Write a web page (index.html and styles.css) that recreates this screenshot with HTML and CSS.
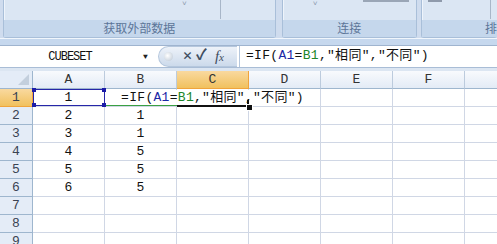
FILE: index.html
```html
<!DOCTYPE html>
<html lang="zh-CN">
<head>
    <meta charset="UTF-8">
    <title>Excel - IF</title>
    <link rel="stylesheet" href="styles.css">
</head>
<body>
    <!-- Ribbon -->
    <div class="ribbon">
        <div class="group g1">
            <div class="group-body">
                <span class="tick t1">˅</span>
                <span class="vline v1"></span>
            </div>
            <div class="group-label">获取外部数据</div>
        </div>
        <div class="group g2">
            <div class="group-body">
                <span class="tick t2">˅</span>
                <span class="cut-text"></span>
            </div>
            <div class="group-label">连接</div>
        </div>
        <div class="group g3">
            <div class="group-body">
                <span class="cut-a"></span>
                <span class="vline v3"></span>
            </div>
            <div class="group-label">排</div>
        </div>
    </div>
    <div class="ribbon-foot"></div>

    <!-- Formula bar -->
    <div class="formula-bar">
        <div class="name-box">
            <span class="name">CUBESET</span>
            <span class="drop">▼</span>
        </div>
        <div class="fx-buttons">
            <span class="dot"></span>
            <span class="btn cancel">✕</span>
            <span class="btn ok">✓</span>
            <span class="btn fx"><i>f</i><i class="x">x</i></span>
        </div>
        <div class="formula-input">=IF(<span class="ref-a">A1</span>=<span class="ref-b">B1</span>,"相同","不同")</div>
    </div>
    <div class="bar-gap"></div>

    <!-- Sheet -->
    <div class="sheet">
        <div class="corner"><span class="tri"></span></div>
        <div class="col-head">A</div>
        <div class="col-head">B</div>
        <div class="col-head active">C</div>
        <div class="col-head">D</div>
        <div class="col-head">E</div>
        <div class="col-head">F</div>
        <div class="col-head"></div>

        <div class="row-head active">1</div>
        <div class="cell">1</div>
        <div class="cell"></div>
        <div class="cell edit"><span class="edit-text">=IF(<span class="ref-a">A1</span>=<span class="ref-b">B1</span>,"相同","不同")</span></div>
        <div class="cell"></div><div class="cell"></div><div class="cell"></div><div class="cell"></div>

        <div class="row-head">2</div>
        <div class="cell">2</div><div class="cell">1</div>
        <div class="cell"></div><div class="cell"></div><div class="cell"></div><div class="cell"></div><div class="cell"></div>

        <div class="row-head">3</div>
        <div class="cell">3</div><div class="cell">1</div>
        <div class="cell"></div><div class="cell"></div><div class="cell"></div><div class="cell"></div><div class="cell"></div>

        <div class="row-head">4</div>
        <div class="cell">4</div><div class="cell">5</div>
        <div class="cell"></div><div class="cell"></div><div class="cell"></div><div class="cell"></div><div class="cell"></div>

        <div class="row-head">5</div>
        <div class="cell">5</div><div class="cell">5</div>
        <div class="cell"></div><div class="cell"></div><div class="cell"></div><div class="cell"></div><div class="cell"></div>

        <div class="row-head">6</div>
        <div class="cell">6</div><div class="cell">5</div>
        <div class="cell"></div><div class="cell"></div><div class="cell"></div><div class="cell"></div><div class="cell"></div>

        <div class="row-head">7</div>
        <div class="cell"></div><div class="cell"></div><div class="cell"></div><div class="cell"></div><div class="cell"></div><div class="cell"></div><div class="cell"></div>

        <div class="row-head">8</div>
        <div class="cell"></div><div class="cell"></div><div class="cell"></div><div class="cell"></div><div class="cell"></div><div class="cell"></div><div class="cell"></div>

        <div class="row-head">9</div>
        <div class="cell"></div><div class="cell"></div><div class="cell"></div><div class="cell"></div><div class="cell"></div><div class="cell"></div><div class="cell"></div>

        <!-- reference highlights while editing -->
        <div class="ref-box-a">
            <span class="h h1"></span><span class="h h2"></span><span class="h h3"></span><span class="h h4"></span>
        </div>
        <div class="ref-line-b"></div>
        <div class="active-bottom"></div>
        <div class="active-right"></div>
        <div class="fill-handle"></div>
    </div>
</body>
</html>
```

FILE: styles.css
```css
/* Base */
body {
    margin: 0;
    width: 497px;
    height: 244px;
    overflow: hidden;
    background: #fff;
    font-family: 'Liberation Mono', 'Noto Sans CJK SC', monospace;
    color: #111;
}

/* Ribbon */
.ribbon {
    display: flex;
    height: 38px;
    background: #cfdcee;
    overflow: hidden;
}

.group {
    display: flex;
    flex-direction: column;
    border: 1px solid #a9bfd9;
    border-top: none;
    border-radius: 0 0 3px 3px;
    box-shadow: inset 1px 0 0 #eef4fb;
    background: #dbe6f3;
}

.g1 { margin-left: 3px; width: 272px; }
.g2 { margin-left: 6px; width: 134px; }
.g3 { margin-left: 4px; flex: 1; border-right: none; }

.group-body {
    position: relative;
    height: 20px;
}

.group-label {
    height: 17px;
    background: #c5d7ec;
    font-family: 'Noto Sans CJK SC', sans-serif;
    font-size: 12px;
    line-height: 16px;
    color: #5c7598;
    text-align: center;
}

.g3 .group-label {
    text-align: left;
    padding-left: 63px;
}

.tick {
    position: absolute;
    top: -1px;
    font-size: 8px;
    color: #8c9aae;
}

.t1 { left: 178px; }
.t2 { left: 30px; }

.vline {
    position: absolute;
    top: 0;
    width: 1px;
    height: 19px;
    background: #a8b6c8;
}

.v1 { left: 216px; }
.v3 { left: 68px; }

.cut-text {
    position: absolute;
    top: 0;
    left: 80px;
    width: 46px;
    height: 2px;
    background: #9aa6b6;
}

.cut-a {
    position: absolute;
    top: 0;
    left: 6px;
    width: 14px;
    height: 2px;
    background: #8f9aab;
}

.ribbon-foot {
    height: 6px;
    background: #c6d8ee;
    border-top: 1px solid #f1f6fc;
}

/* Formula bar */
.formula-bar {
    display: flex;
    height: 21px;
    border-top: 1px solid #9fb4cf;
    background: #fff;
}

.name-box {
    width: 158px;
    display: flex;
    align-items: center;
}

.name {
    width: 140px;
    text-align: center;
    font-size: 12px;
    letter-spacing: -1px;
    color: #111;
}

.drop {
    font-size: 8px;
    color: #222;
    margin-left: 3px;
}

.fx-buttons {
    width: 79px;
    display: flex;
    align-items: center;
    border-radius: 11px 0 0 11px;
    background: linear-gradient(#edf2f9, #ccdaeb);
    border: 1px solid #b5c7dd;
    border-right: none;
    box-sizing: border-box;
}

.dot {
    width: 9px;
    height: 9px;
    margin-left: 5px;
    border-radius: 50%;
    background: radial-gradient(circle at 40% 40%, #fff, #b8c4d2);
}

.btn {
    color: #3f4d60;
    font-size: 15px;
    line-height: 1;
}

.cancel { margin-left: 10px; font-weight: bold; }
.ok { margin-left: 4px; font-weight: bold; }

.fx {
    margin-left: 8px;
    font-family: 'Liberation Serif', serif;
    font-size: 15px;
}

.fx .x { font-size: 11px; }

.formula-input {
    flex: 1;
    border-left: 1px solid #b5c7dd;
    margin-left: 2px;
    padding-left: 6px;
    font-size: 13px;
    letter-spacing: 0.3px;
    line-height: 20px;
    white-space: nowrap;
}

.ref-a { color: #1b27a6; }
.ref-b { color: #20862a; }

.bar-gap {
    height: 3px;
    background: #dce6f2;
    border-top: 1px solid #a9bdd6;
}

/* Sheet grid */
.sheet {
    position: relative;
    display: grid;
    grid-template-columns: 33px repeat(7, 72px);
    grid-auto-rows: 18px;
}

.corner, .col-head, .row-head, .cell {
    box-sizing: border-box;
    display: flex;
    align-items: center;
    justify-content: center;
    font-size: 13px;
}

.corner {
    position: relative;
    background: #e4ecf7;
    border-right: 1px solid #9eb6ce;
    border-bottom: 1px solid #9eb6ce;
}

.tri {
    position: absolute;
    right: 3px;
    bottom: 3px;
    width: 0;
    height: 0;
    border-left: 11px solid transparent;
    border-bottom: 11px solid #c3cfdd;
}

.col-head {
    background: linear-gradient(#f8fafd, #e3ebf6);
    border-right: 1px solid #bccbdd;
    border-bottom: 1px solid #9eb6ce;
    color: #333;
}

.row-head {
    background: #e4ecf7;
    border-right: 1px solid #9eb6ce;
    border-bottom: 1px solid #9eb6ce;
    color: #3a4352;
}

.col-head.active, .row-head.active {
    background: linear-gradient(#f9d99f, #f1c15f);
    border-color: #f0a43c;
}

.cell {
    border-right: 1px solid #d0d7e5;
    border-bottom: 1px solid #d0d7e5;
}

.cell.edit {
    overflow: visible;
}

.edit-text {
    flex-shrink: 0;
    position: relative;
    z-index: 1;
    white-space: nowrap;
    background: #fff;
    letter-spacing: 0.3px;
    line-height: 16px;
    padding: 0 2px;
}

/* Highlights */
.ref-box-a {
    position: absolute;
    left: 33px;
    top: 18px;
    width: 72px;
    height: 17px;
    box-sizing: border-box;
    border: 1px solid #2626a8;
    z-index: 2;
}

.h {
    position: absolute;
    width: 4px;
    height: 4px;
    background: #1c1ca8;
}

.h1 { left: -2px; top: -2px; }
.h2 { right: -2px; top: -2px; }
.h3 { left: -2px; bottom: -2px; }
.h4 { right: -2px; bottom: -2px; }

.ref-line-b {
    position: absolute;
    left: 106px;
    top: 34px;
    width: 71px;
    height: 1px;
    background: #3aa043;
    z-index: 2;
}

.active-bottom {
    position: absolute;
    left: 177px;
    top: 34px;
    width: 72px;
    height: 2px;
    background: #111;
    z-index: 2;
}

.active-right {
    position: absolute;
    left: 247px;
    top: 29px;
    width: 2px;
    height: 6px;
    background: #111;
    z-index: 2;
}

.fill-handle {
    position: absolute;
    left: 246px;
    top: 33px;
    width: 5px;
    height: 5px;
    background: #111;
    border: 1px solid #fff;
    z-index: 3;
}
```
